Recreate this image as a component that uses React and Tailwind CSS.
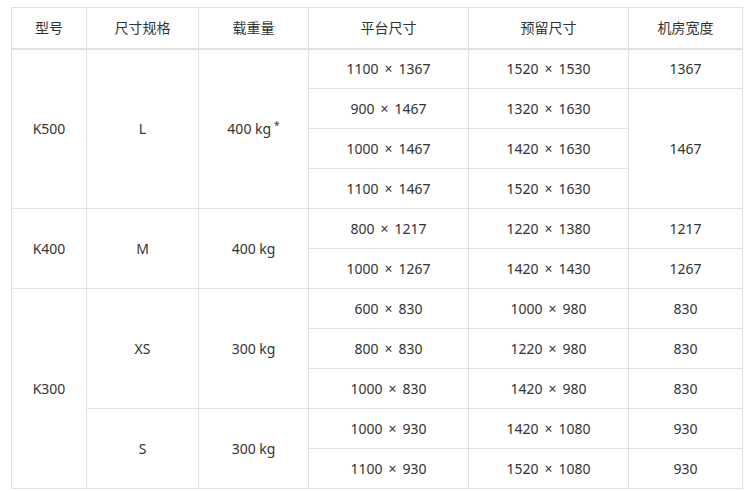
import React from 'react'

const HEAD = ['型号', '尺寸规格', '载重量', '平台尺寸', '预留尺寸', '机房宽度']
const WIDTHS = ['w-[75px]', 'w-[112px]', 'w-[110px]', 'w-[160px]', 'w-[160px]', 'w-[114px]']

const td = 'border border-[#dfe2e5] h-[40px] p-0 text-center align-middle font-normal'

// "a × b" with the wider spacing around the times sign
function Dim({ v }) {
  const [a, b] = v.split('x')
  return (
    <td className={td}>
      {a}<span className="mx-[6px]">×</span>{b}
    </td>
  )
}

export default function App() {
  return (
    <div
      className="w-[746px] h-[491px] bg-white pt-[7px] pl-[11px] text-[14px] text-[#333]"
      style={{ fontFamily: '"Noto Sans", "Noto Sans CJK SC", sans-serif' }}
    >
      <table className="border-collapse table-fixed w-[731px]">
        <thead>
          <tr>
            {HEAD.map((h, i) => (
              <th key={h} className={`${td} ${WIDTHS[i]} border-b-2 h-[41px]`}>{h}</th>
            ))}
          </tr>
        </thead>
        <tbody>
          <tr>
            <td className={td} rowSpan={4}>K500</td>
            <td className={td} rowSpan={4}>L</td>
            <td className={td} rowSpan={4}>
              400 kg<sup className="ml-[3px] text-[10px]">*</sup>
            </td>
            <Dim v="1100x1367" />
            <Dim v="1520x1530" />
            <td className={td}>1367</td>
          </tr>
          <tr>
            <Dim v="900x1467" />
            <Dim v="1320x1630" />
            <td className={td} rowSpan={3}>1467</td>
          </tr>
          <tr>
            <Dim v="1000x1467" />
            <Dim v="1420x1630" />
          </tr>
          <tr>
            <Dim v="1100x1467" />
            <Dim v="1520x1630" />
          </tr>
          <tr>
            <td className={td} rowSpan={2}>K400</td>
            <td className={td} rowSpan={2}>M</td>
            <td className={td} rowSpan={2}>400 kg</td>
            <Dim v="800x1217" />
            <Dim v="1220x1380" />
            <td className={td}>1217</td>
          </tr>
          <tr>
            <Dim v="1000x1267" />
            <Dim v="1420x1430" />
            <td className={td}>1267</td>
          </tr>
          <tr>
            <td className={td} rowSpan={5}>K300</td>
            <td className={td} rowSpan={3}>XS</td>
            <td className={td} rowSpan={3}>300 kg</td>
            <Dim v="600x830" />
            <Dim v="1000x980" />
            <td className={td}>830</td>
          </tr>
          <tr>
            <Dim v="800x830" />
            <Dim v="1220x980" />
            <td className={td}>830</td>
          </tr>
          <tr>
            <Dim v="1000x830" />
            <Dim v="1420x980" />
            <td className={td}>830</td>
          </tr>
          <tr>
            <td className={td} rowSpan={2}>S</td>
            <td className={td} rowSpan={2}>300 kg</td>
            <Dim v="1000x930" />
            <Dim v="1420x1080" />
            <td className={td}>930</td>
          </tr>
          <tr>
            <Dim v="1100x930" />
            <Dim v="1520x1080" />
            <td className={td}>930</td>
          </tr>
        </tbody>
      </table>
    </div>
  )
}
